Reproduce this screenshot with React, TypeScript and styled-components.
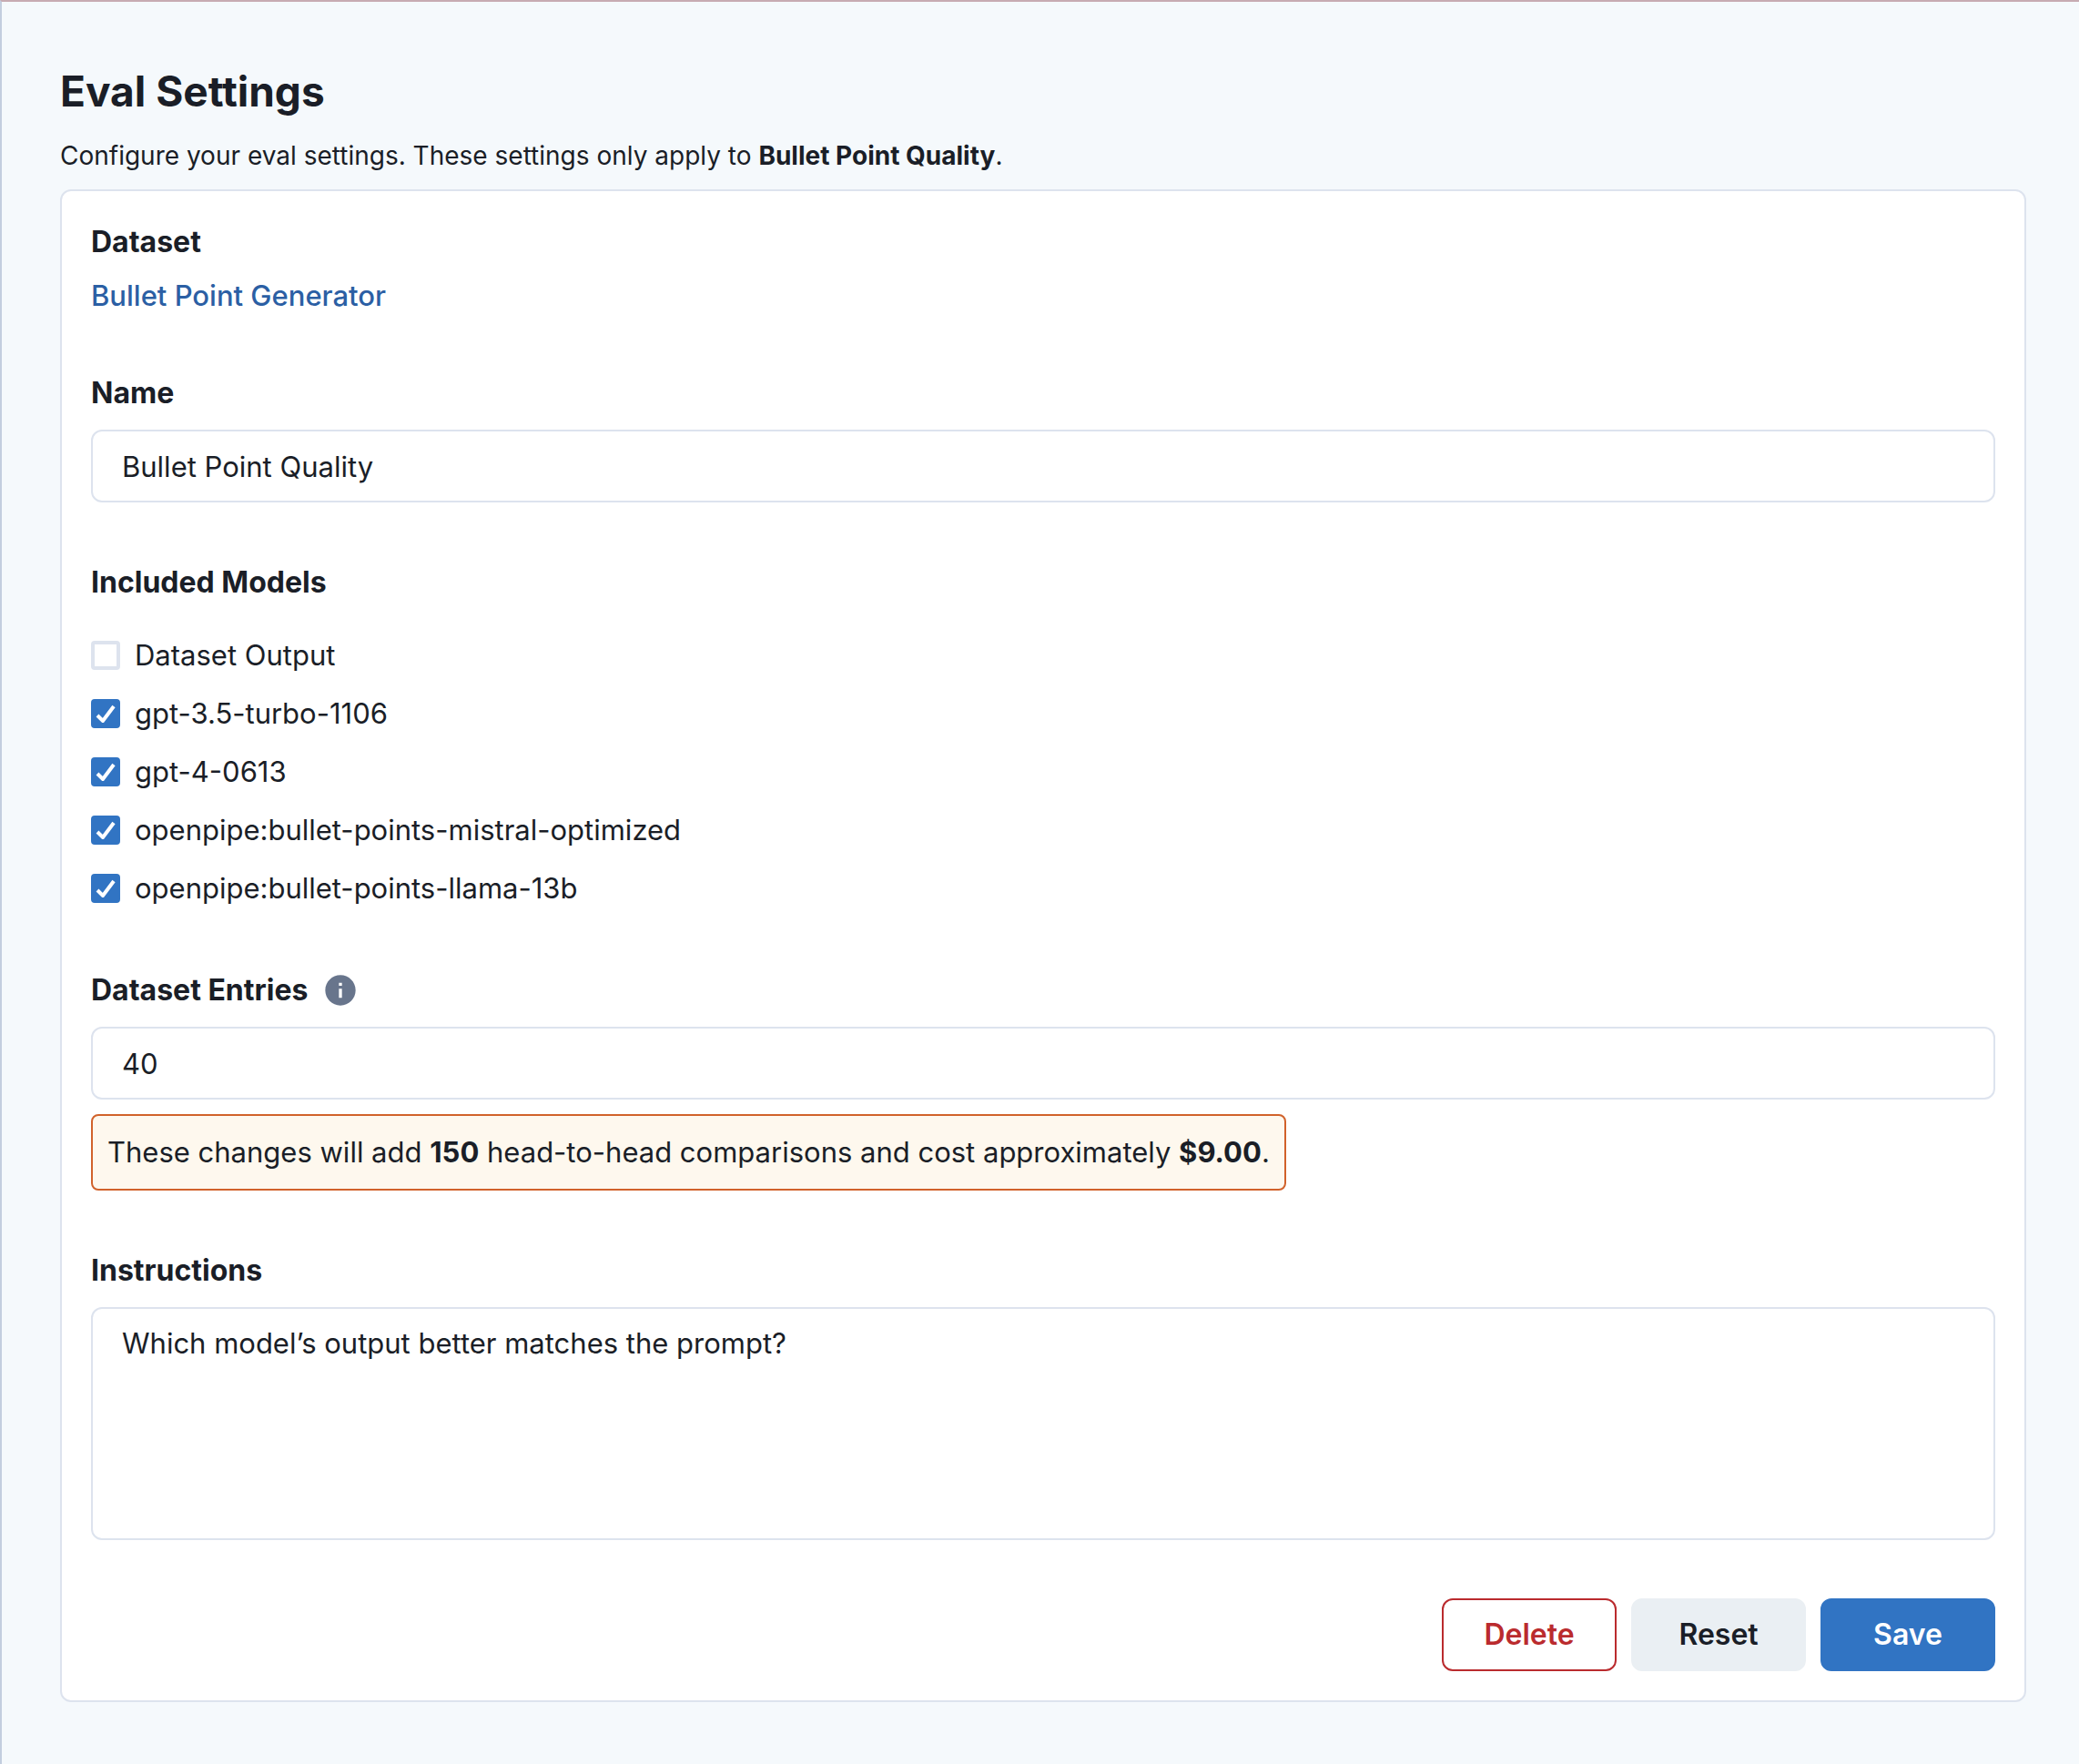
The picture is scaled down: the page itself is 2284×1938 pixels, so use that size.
import React, { useState } from "react";
import styled, { createGlobalStyle, css } from "styled-components";
import { MdInfo } from "react-icons/md";

const color = {
  page: "#f5f9fc",
  text: "#1a1e27",
  line: "#dde3ee",
  link: "#2b5fa4",
  primary: "#3174c3",
  danger: "#ba2b2e",
  neutral: "#eaeff3",
  icon: "#68758c",
  warningLine: "#d1622b",
  warningFill: "#fef8ee",
};

const GlobalStyle = createGlobalStyle`
  *, *::before, *::after { box-sizing: border-box; }
  body {
    margin: 0;
    background: ${color.page};
    color: ${color.text};
    font-family: Inter, "Liberation Sans", sans-serif;
    font-size: 31px;
    line-height: 48px;
    -webkit-font-smoothing: antialiased;
  }
`;

const Page = styled.main`
  display: flex;
  flex-direction: column;
  gap: 16px;
  min-height: 100vh;
  padding: 64px 58px 64px 64px;
  border-top: 2px solid #c7abb2;
  border-left: 2px solid #c3cedf;
`;

const Title = styled.h1`
  margin: 0;
  font-size: 46px;
  line-height: 68px;
  font-weight: 700;
`;

const Subtitle = styled.p`
  margin: 0;
  font-size: 28px;
  line-height: 42px;
`;

const Card = styled.form`
  display: flex;
  flex-direction: column;
  gap: 64px;
  padding: 32px;
  background: #fff;
  border: 2px solid ${color.line};
  border-radius: 12px;
`;

const Section = styled.section`
  display: flex;
  flex-direction: column;
  align-items: flex-start;
  gap: 16px;
`;

const headingText = css`
  margin: 0;
  font-size: 32px;
  line-height: 48px;
  font-weight: 700;
`;

const Heading = styled.h2`
  ${headingText}
`;

const Label = styled.label`
  ${headingText}
`;

const LabelRow = styled.div`
  display: flex;
  align-items: center;
  gap: 16px;
  height: 48px;
`;

const InfoIcon = styled(MdInfo)`
  width: 40px;
  height: 40px;
  color: ${color.icon};
`;

const DatasetLink = styled.a`
  color: ${color.link};
  font-weight: 500;
  line-height: 38px;
  text-decoration: none;
`;

const fieldBox = css`
  width: 100%;
  padding: 14px 32px;
  color: inherit;
  background: #fff;
  border: 2px solid ${color.line};
  border-radius: 12px;
  font: inherit;
  outline: none;
`;

const TextInput = styled.input`
  ${fieldBox}
  height: 80px;
`;

const TextArea = styled.textarea`
  ${fieldBox}
  display: block;
  height: 256px;
  resize: none;
`;

const ModelList = styled.div`
  display: flex;
  flex-direction: column;
  align-items: flex-start;
  gap: 16px;
  padding-top: 16px;
`;

const ModelOption = styled.label`
  display: flex;
  align-items: center;
  gap: 16px;
  cursor: pointer;
`;

const CheckCell = styled.span`
  display: grid;
  place-items: center;
  width: 32px;
  height: 32px;

  > * {
    grid-area: 1 / 1;
  }
`;

const CheckInput = styled.input`
  appearance: none;
  width: 32px;
  height: 32px;
  margin: 0;
  border: 4px solid ${color.line};
  border-radius: 4px;

  &:checked {
    background: ${color.primary};
    border-color: ${color.primary};
  }
`;

const CheckMark = styled.svg`
  width: 24px;
  height: 20px;
  fill: none;
  stroke: #fff;
  stroke-width: 2;
  pointer-events: none;
`;

const Warning = styled.p`
  margin: 0;
  padding: 16px;
  background: ${color.warningFill};
  border: 2px solid ${color.warningLine};
  border-radius: 8px;
`;

const Actions = styled.div`
  display: flex;
  justify-content: flex-end;
  gap: 16px;
`;

const tones = {
  danger: css`
    color: ${color.danger};
    background: #fff;
    border-color: ${color.danger};
  `,
  neutral: css`
    color: ${color.text};
    background: ${color.neutral};
    border-color: ${color.neutral};
  `,
  primary: css`
    color: #fff;
    background: ${color.primary};
    border-color: ${color.primary};
  `,
};

const Button = styled.button<{ $tone: keyof typeof tones }>`
  width: 192px;
  height: 80px;
  padding: 0;
  border: 2px solid;
  border-radius: 12px;
  font: inherit;
  font-size: 32px;
  font-weight: 600;
  cursor: pointer;
  ${({ $tone }) => tones[$tone]}
`;

const initialModels = [
  { name: "Dataset Output", included: false },
  { name: "gpt-3.5-turbo-1106", included: true },
  { name: "gpt-4-0613", included: true },
  { name: "openpipe:bullet-points-mistral-optimized", included: true },
  { name: "openpipe:bullet-points-llama-13b", included: true },
];

export default function App() {
  const [models, setModels] = useState(initialModels);
  const [name, setName] = useState("Bullet Point Quality");
  const [entries, setEntries] = useState("40");
  const [instructions, setInstructions] = useState(
    "Which model’s output better matches the prompt?"
  );

  const toggle = (target: string) =>
    setModels((list) =>
      list.map((m) => (m.name === target ? { ...m, included: !m.included } : m))
    );

  return (
    <>
      <GlobalStyle />
      <Page>
        <Title>Eval Settings</Title>
        <Subtitle>
          Configure your eval settings. These settings only apply to{" "}
          <b>Bullet Point Quality</b>.
        </Subtitle>
        <Card onSubmit={(e) => e.preventDefault()}>
          <Section>
            <Heading>Dataset</Heading>
            <DatasetLink href="#dataset">Bullet Point Generator</DatasetLink>
          </Section>

          <Section>
            <Label htmlFor="name">Name</Label>
            <TextInput
              id="name"
              value={name}
              onChange={(e) => setName(e.target.value)}
            />
          </Section>

          <Section>
            <Heading id="models-heading">Included Models</Heading>
            <ModelList role="group" aria-labelledby="models-heading">
              {models.map((m) => (
                <ModelOption key={m.name}>
                  <CheckCell>
                    <CheckInput
                      type="checkbox"
                      checked={m.included}
                      onChange={() => toggle(m.name)}
                    />
                    {m.included && (
                      <CheckMark viewBox="0 0 12 10" aria-hidden="true">
                        <polyline points="1.5 6 4.5 9 10.5 1" />
                      </CheckMark>
                    )}
                  </CheckCell>
                  {m.name}
                </ModelOption>
              ))}
            </ModelList>
          </Section>

          <Section>
            <LabelRow>
              <Label htmlFor="entries">Dataset Entries</Label>
              <InfoIcon aria-hidden="true" />
            </LabelRow>
            <TextInput
              id="entries"
              inputMode="numeric"
              value={entries}
              onChange={(e) => setEntries(e.target.value)}
            />
            <Warning>
              These changes will add <b>150</b> head-to-head comparisons and
              cost approximately <b>$9.00</b>.
            </Warning>
          </Section>

          <Section>
            <Label htmlFor="instructions">Instructions</Label>
            <TextArea
              id="instructions"
              value={instructions}
              onChange={(e) => setInstructions(e.target.value)}
            />
          </Section>

          <Actions>
            <Button type="button" $tone="danger">
              Delete
            </Button>
            <Button type="reset" $tone="neutral">
              Reset
            </Button>
            <Button type="submit" $tone="primary">
              Save
            </Button>
          </Actions>
        </Card>
      </Page>
    </>
  );
}
